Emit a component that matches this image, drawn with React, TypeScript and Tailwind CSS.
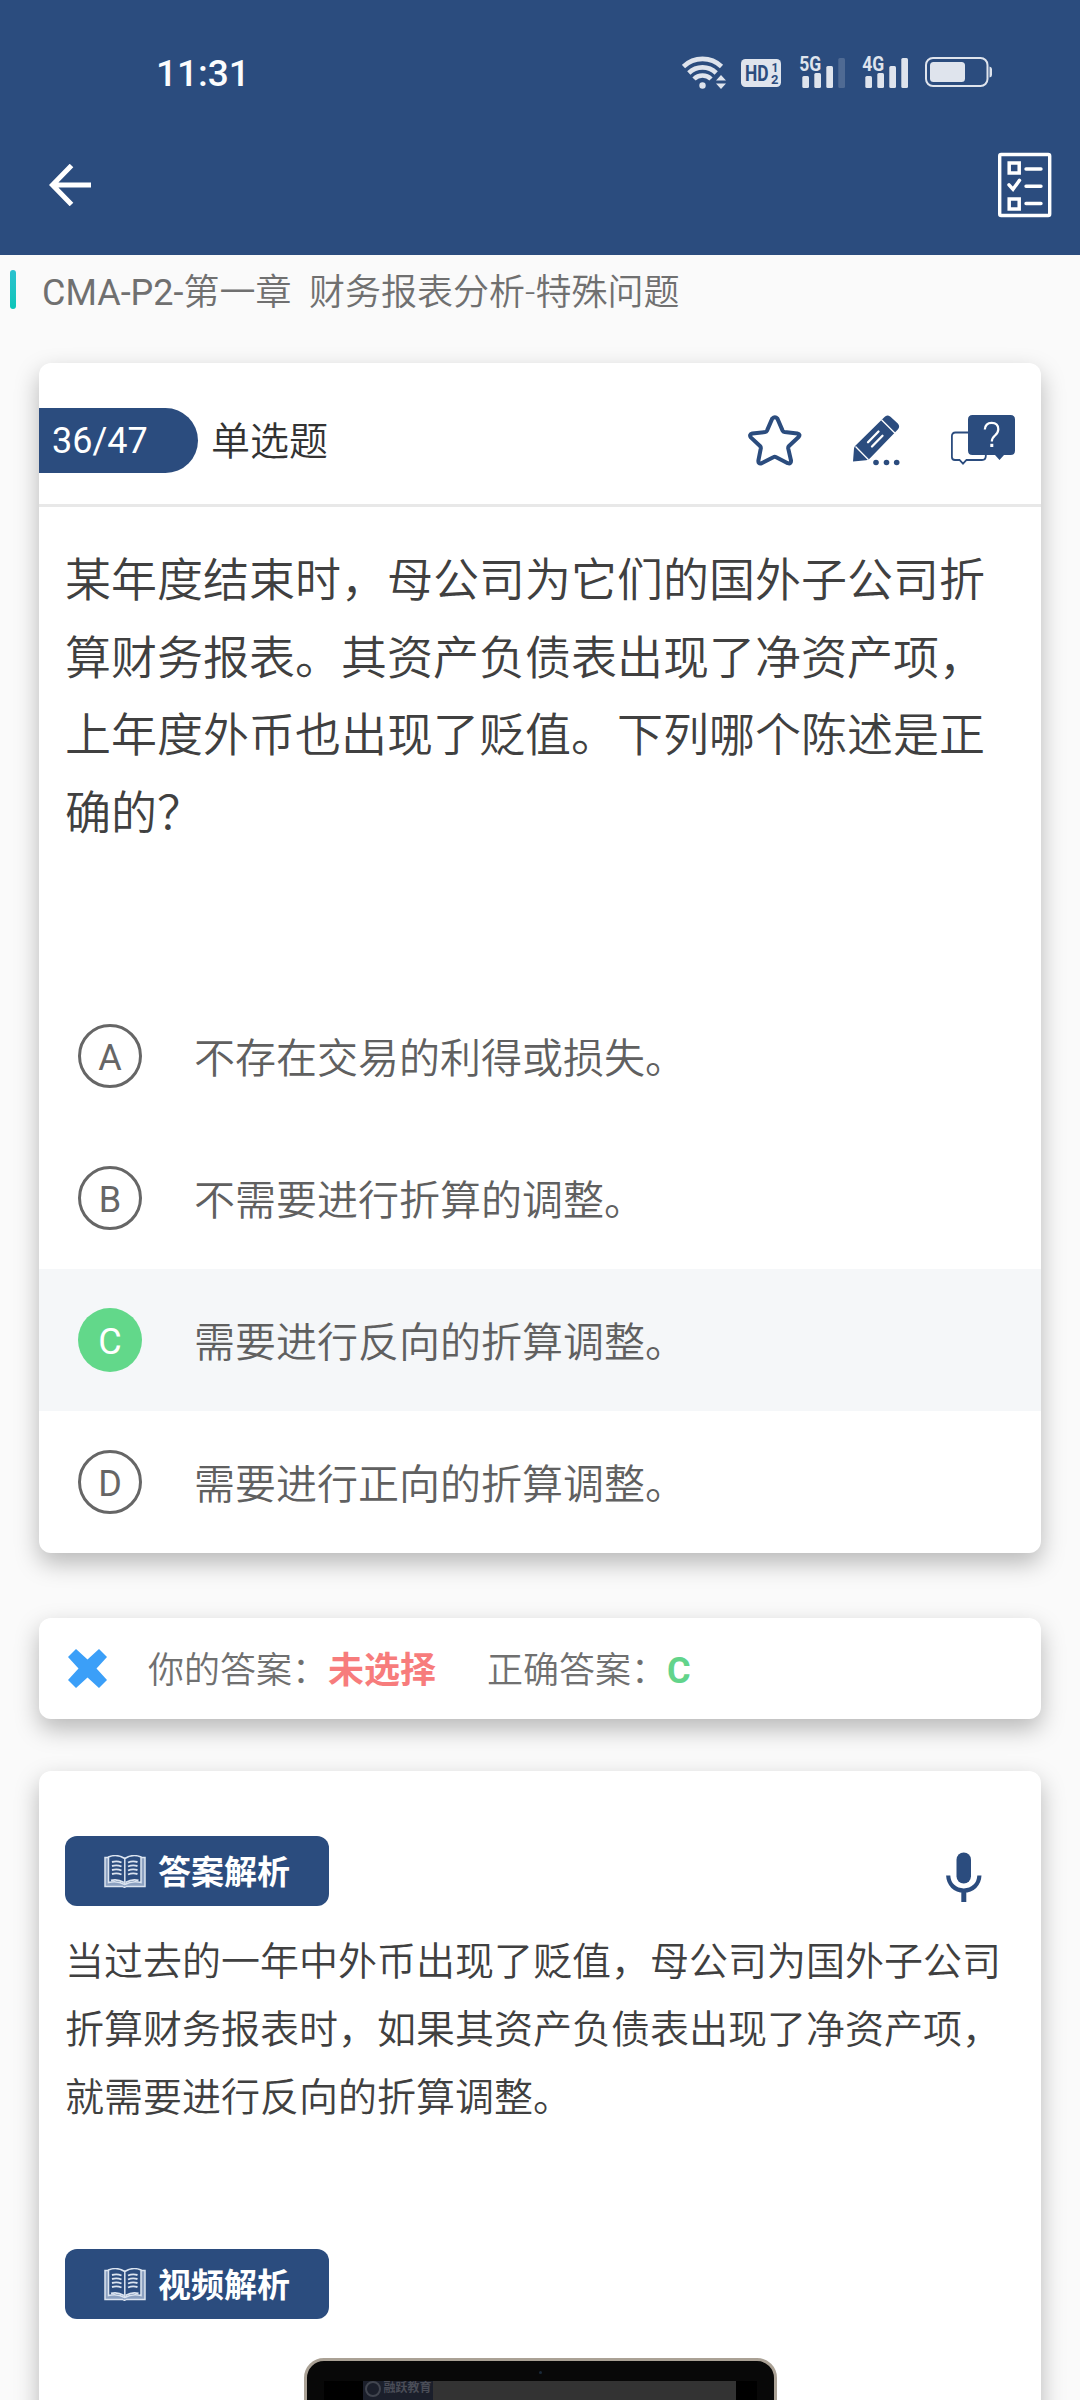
import type { ReactNode } from 'react';

interface Option {
  key: string;
  text: string;
  correct?: boolean;
}

const options: Option[] = [
  { key: 'A', text: '不存在交易的利得或损失。' },
  { key: 'B', text: '不需要进行折算的调整。' },
  { key: 'C', text: '需要进行反向的折算调整。', correct: true },
  { key: 'D', text: '需要进行正向的折算调整。' },
];

const questionLines = [
  '某年度结束时，母公司为它们的国外子公司折',
  '算财务报表。其资产负债表出现了净资产项，',
  '上年度外币也出现了贬值。下列哪个陈述是正',
  '确的？',
];

const analysisLines = [
  '当过去的一年中外币出现了贬值，母公司为国外子公司',
  '折算财务报表时，如果其资产负债表出现了净资产项，',
  '就需要进行反向的折算调整。',
];

function WifiIcon() {
  return (
    <svg width="44" height="36" viewBox="682 53 44 36" fill="none" stroke="#dfe4ed" strokeWidth="4.6">
      <path d="M683.5 65.5a27.5 27.5 0 0 1 38 0" />
      <path d="M688.8 72a19.6 19.6 0 0 1 27.4 0" />
      <path d="M694 78a12 12 0 0 1 17 0" />
      <circle cx="702.5" cy="84.5" r="3.2" fill="#dfe4ed" stroke="none" />
      <path d="M721 74l5 5.5h-10zM721 88l5-5.5h-10z" fill="#dfe4ed" stroke="none" />
    </svg>
  );
}

function HdIcon() {
  return (
    <svg width="40" height="28" viewBox="0 0 40 28" fontFamily="Roboto, sans-serif" fontWeight="700">
      <rect width="40" height="28" rx="4.5" fill="#dfe4ed" />
      <text x="4" y="22" fontSize="22.5" textLength="23.5" lengthAdjust="spacingAndGlyphs" fill="#2b4c7e">HD</text>
      <text x="30.5" y="12.5" fontSize="12" fill="#2b4c7e">1</text>
      <text x="30" y="25" fontSize="13" fill="#2b4c7e">2</text>
    </svg>
  );
}

function SignalIcon({ label, weak = false }: { label: string; weak?: boolean }) {
  return (
    <svg width="46" height="42" viewBox="0 -4 46 42" fill="#dfe4ed">
      <text x="0.3" y="16.2" fontSize="21" fontFamily="Roboto, sans-serif" fontWeight="700" textLength="22" lengthAdjust="spacingAndGlyphs">
        {label}
      </text>
      <rect x="3.3" y="21" width="6.7" height="12" rx="1.5" />
      <rect x="15.3" y="18" width="6.7" height="15" rx="1.5" />
      <rect x="27.3" y="11" width="6.7" height="22" rx="1.5" />
      <rect x="39.3" y="3" width="6.7" height="30" rx="1.5" opacity={weak ? 0.2 : 1} />
    </svg>
  );
}

function BatteryIcon() {
  return (
    <svg width="68" height="30" viewBox="0 0 68 30">
      <rect x="1" y="1" width="61.5" height="28" rx="7" fill="none" stroke="#dfe4ed" strokeWidth="2" />
      <rect x="5" y="5" width="35" height="20" rx="3.5" fill="#dfe4ed" />
      <path d="M64.5 9.5q2.5 .5 2.5 2.5v6q0 2-2.500 2.500z" fill="#dfe4ed" />
    </svg>
  );
}

function ChecklistIcon() {
  return (
    <svg width="54" height="66" viewBox="0 0 54 66" fill="none" stroke="#fff" strokeWidth="3.4" strokeLinecap="round">
      <rect x="1.7" y="2.5" width="50" height="61" rx="1.5" />
      <rect x="11.2" y="11" width="10" height="10" strokeWidth="3.5" />
      <path d="M11 32.8l4 4.5 6.5-9" strokeWidth="3.5" />
      <rect x="11.2" y="47" width="10" height="10" strokeWidth="3.5" />
      <path d="M28 17h15M28 34.2h15M28 51.5h15" />
    </svg>
  );
}

function StarIcon() {
  return (
    <svg width="54" height="51" viewBox="0 0 54 51" fill="none" stroke="#2b4c7e" strokeWidth="4" strokeLinejoin="round">
      <path d="M24.200 3.600Q27 .8 29.400 3.600L34.600 15.600Q35.200 16.900 36.600 17.100L49.300 18.500Q52.800 19.300 50.600 22L41 31Q40 32 40.200 33.400L43 45.500Q43.200 49.200 39.800 48.200L28.200 42.200Q26.700 41.400 25.300 42.200L13.600 48.200Q10 49.200 10.400 45.500L12.800 33.400Q13 32 12 31L2.800 22.400Q.8 19.300 4.300 18.500L17 17.100Q18.400 16.900 19 15.600Z" />
    </svg>
  );
}

function PencilIcon() {
  return (
    <svg width="48" height="51" viewBox="0 0 48 51" fill="#2b4c7e">
      <path d="M31.500 2Q34 -1 37.500 1.800L44.800 8.500Q47.500 11.500 44.800 14.500L17 43.200Q15.500 45 13 45.200L0 46.600 1 33.500Q1.200 32 2.300 30.800Z" />
      <path d="M28.500 4.800L41.800 18M2.500 31.500L15.500 44.800" stroke="#fff" strokeWidth="1.300" />
      <path d="M15 27.200L25.500 16.500M19 31.500L29.500 20.800" stroke="#fff" strokeWidth="2.300" strokeLinecap="round" />
      <circle cx="23" cy="47.500" r="2.800" />
      <circle cx="33.500" cy="47.500" r="2.800" />
      <circle cx="43.700" cy="47.500" r="2.800" />
    </svg>
  );
}

function QuestionBubbleIcon() {
  return (
    <svg width="64" height="51" viewBox="0 0 64 51">
      <path
        d="M20 17.500H4.500Q.9 17.500 .9 21V42Q.9 45 4 45H8.500L12 48.700 15.500 45H31Q34.800 45 34.800 41V38"
        fill="none"
        stroke="#2b4c7e"
        strokeWidth="1.800"
      />
      <path d="M21.500 0H59.500Q64 0 64 4.500V35.500Q64 40 59.500 40H53L48.500 45 44 40H21.500Q17 40 17 35.500V4.500Q17 0 21.500 0Z" fill="#2b4c7e" />
      <path d="M33.800 14.500Q34.300 7.800 40.600 7.800 47.300 7.800 47.300 14.200 47.300 17.500 44 20.500 40.800 23.300 40.800 26.500" fill="none" stroke="#fff" strokeWidth="2.200" />
      <rect x="39.300" y="28.800" width="3" height="3.200" fill="#fff" />
    </svg>
  );
}

function BookIcon() {
  return (
    <svg width="42" height="33" viewBox="0 0 42 33" fill="none" stroke="#dbe4f0" strokeWidth="1.500">
      <path d="M5 2.500H1v29h17.500q2 1.500 4 0H41v-29h-4" fill="#8ba0c0" />
      <path d="M20.800 3.500Q13-1.500 4.500 2v25.500q9-2 16.300 2 7.200-4 16.200-2V2q-8.500-3.500-16.200 1.500v26" fill="#2b4c7e" />
      <path
        d="M8 7q5-1.500 9.500.5M8 11q5-1.500 9.500.5M8 15q5-1.500 9.500.5M8 19q5-1.500 9.500.5M24 7.500q4.500-2 9.500-.5M24 11.500q4.500-2 9.500-.5M24 15.500q4.500-2 9.500-.5M24 19.500q4.500-2 9.500-.5M7 25.500q6-2 13 2M34.500 25.500q-6-2-13 2"
        strokeWidth="1.900"
      />
    </svg>
  );
}

function MicIcon() {
  return (
    <svg width="36" height="50" viewBox="0 0 36 50" fill="none" stroke="#2b4c7e">
      <rect x="10.500" y=".5" width="14.500" height="31" rx="7.250" fill="#2b4c7e" stroke="none" />
      <path d="M2.200 23.500C2.600 32.500 9 38.500 17.800 38.500S33 32.500 33.400 23.500" strokeWidth="4.200" />
      <path d="M17.800 38.500V50" strokeWidth="5" />
    </svg>
  );
}

function Card({ className, children }: { className: string; children: ReactNode }) {
  return (
    <section className={`mx-[39px] rounded-xl bg-white shadow-[0_10px_24px_rgba(0,0,0,0.27)] ${className}`}>{children}</section>
  );
}

function SectionBadge({ label }: { label: string }) {
  return (
    <div className="flex h-[70px] w-[264px] items-center gap-[12px] rounded-xl bg-[#2b4c7e] pl-[39px] text-[33px] leading-none font-bold text-white">
      <BookIcon />
      <span className="pt-[3px] whitespace-nowrap">{label}</span>
    </div>
  );
}

function Laptop() {
  return (
    <div className="mx-auto mt-[39px] h-[300px] w-[473px] rounded-[20px] border-[3px] border-[#aaa195] bg-[#080808]">
      <div className="mx-auto mt-[10px] h-[3px] w-[3px] rounded-full bg-[#1b2a3a]" />
      <div className="mx-[17px] mt-[7px] flex h-[260px] bg-black pr-[21px] pl-[39px]">
        <div className="flex h-[260px] w-[70px] items-start gap-[3px] bg-[#1b1f2b] pl-[2px] whitespace-nowrap text-[#4a4d57]">
          <div className="h-[16px] w-[16px] shrink-0 rounded-full border-2 border-[#41454f]" />
          <div className="text-[12px] leading-[14px] font-bold">融跃教育</div>
        </div>
        <div className="flex-1 bg-[#333]" />
      </div>
    </div>
  );
}

export default function App() {
  return (
    <div className="h-[2400px] w-[1080px] overflow-hidden bg-[#fafafa] font-['Roboto','Noto_Sans_CJK_SC',sans-serif]">
      <header className="h-[255px] bg-[#2b4c7e]">
        <div className="flex h-[144px] items-center justify-between pr-[87px] pl-[156px]">
          <span className="pt-[2px] text-[37px] leading-none font-medium text-[#fbfcfd]">11:31</span>
          <div className="flex items-center">
            <WifiIcon />
            <div className="ml-[15px] pt-[2px]"><HdIcon /></div>
            <div className="ml-[18px]"><SignalIcon label="5G" weak /></div>
            <div className="ml-[17px]"><SignalIcon label="4G" /></div>
            <div className="ml-[17px]"><BatteryIcon /></div>
          </div>
        </div>
        <div className="flex h-[82px] items-center justify-between pr-[28px] pl-[49px]">
          <svg width="43" height="42" viewBox="0 0 43 42" fill="none" stroke="#fff" strokeWidth="5">
            <path d="M22.500 1.500L3.500 21l19 19.500M4 21h38" />
          </svg>
          <ChecklistIcon />
        </div>
      </header>

      <div className="flex h-[72px] items-center pl-[10px]">
        <div className="mb-[3px] h-[39px] w-[6px] rounded-full bg-gradient-to-b from-[#2ac1cf] to-[#0ac5b8]" />
        <h1 className="ml-[26px] pt-[4px] text-[36px] leading-none font-[350] whitespace-pre text-[#707070]">
          <span className="font-normal">CMA-P2-</span>第一章  财务报表分析-特殊问题
        </h1>
      </div>

      <Card className="mt-[36px] h-[1190px]">
        <div className="flex h-[144px] items-center justify-between border-b-[3px] border-[#e8e8e8] pt-[13px] pr-[26px]">
          <div className="flex items-center">
            <div className="flex h-[65px] w-[159px] items-center rounded-r-full bg-[#2b4c7e] pt-[2px] pl-[13px] text-[36px] text-white">36/47</div>
            <span className="ml-[13px] pt-[4px] text-[39px] leading-none font-[350] text-[#333]">单选题</span>
          </div>
          <div className="flex items-center pt-[1px]">
            <StarIcon />
            <div className="ml-[51px]"><PencilIcon /></div>
            <div className="ml-[50px]"><QuestionBubbleIcon /></div>
          </div>
        </div>
        <div className="h-[478px] pt-[35px] pl-[26px] text-[46px] leading-[77.500px] font-[350] whitespace-nowrap text-[#404040]">
          {questionLines.map((line) => (
            <p key={line}>{line}</p>
          ))}
        </div>
        {options.map((option) => (
          <div key={option.key} className={`flex h-[142px] items-center pl-[39px] ${option.correct ? 'bg-[#f5f7f9]' : ''}`}>
            <div
              className={`flex h-[64px] w-[64px] items-center justify-center rounded-full pt-[3px] text-[36px] leading-none ${
                option.correct ? 'bg-[#62d88a] text-white' : 'border-[3px] border-[#666] text-[#666]'
              }`}
            >
              {option.key}
            </div>
            <span className="ml-[52px] pt-[6px] text-[41px] leading-none font-[350] text-[#606060]">{option.text}</span>
          </div>
        ))}
      </Card>

      <Card className="mt-[65px] flex h-[101px] items-center pl-[29px] text-[36px] leading-none text-[#707070]">
        <svg width="39" height="39" viewBox="0 0 39 39" fill="#3b9ff8">
          <path d="M8 0L19.500 10.500 31 0 39 8 28.500 19.500 39 31 31 39 19.500 28.500 8 39 0 31 10.500 19.500 0 8Z" />
        </svg>
        <span className="ml-[41px] pt-[5px] font-[350]">你的答案：</span>
        <span className="pt-[5px] font-bold text-[#f77c7c]">未选择</span>
        <span className="ml-[51px] pt-[5px] font-[350]">正确答案：</span>
        <span className="pt-[4px] font-bold text-[#62d48b]">C</span>
      </Card>

      <Card className="mt-[52px] h-[700px] px-[26px] pt-[65px]">
        <div className="flex justify-between">
          <SectionBadge label="答案解析" />
          <div className="mt-[16px] mr-[33px]"><MicIcon /></div>
        </div>
        <div className="mt-[22px] h-[321px] text-[39px] leading-[68px] font-[350] whitespace-nowrap text-[#404040]">
          {analysisLines.map((line) => (
            <p key={line}>{line}</p>
          ))}
        </div>
        <SectionBadge label="视频解析" />
        <Laptop />
      </Card>
    </div>
  );
}
